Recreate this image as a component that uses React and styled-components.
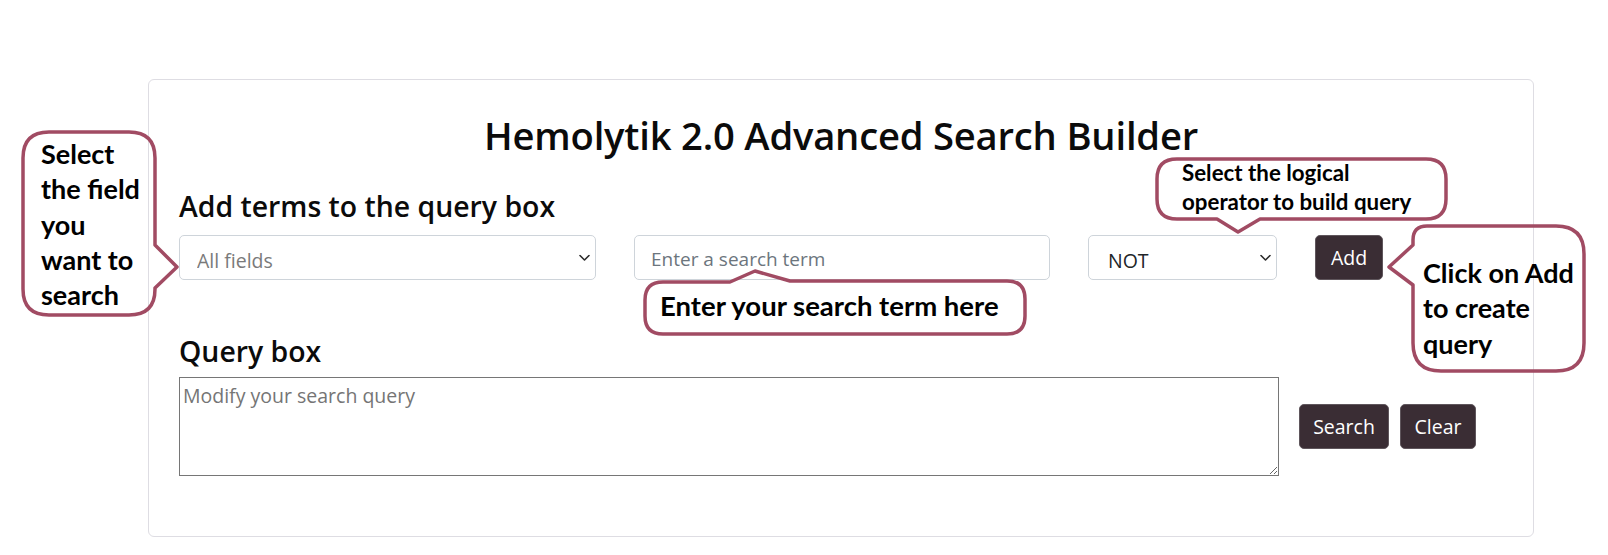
import React from 'react';
import styled, { createGlobalStyle } from 'styled-components';

const GlobalStyle = createGlobalStyle`
  html, body { margin: 0; padding: 0; background: #ffffff; }
  body { font-family: "Open Sans", "Liberation Sans", sans-serif; color: #212529; }
  *, *::before, *::after { box-sizing: border-box; }
`;

const Page = styled.div`
  position: relative;
  width: 1608px;
  height: 555px;
  padding: 79px 0 0 148px;
  overflow: hidden;
`;

const Card = styled.section`
  width: 1386px;
  height: 458px;
  border: 1px solid #dedde3;
  border-radius: 6px;
  padding: 32px 30px 0 30px;
  display: flex;
  flex-direction: column;
`;

const Title = styled.h1`
  margin: 0 0 31px 0;
  font-family: "Open Sans", "Liberation Sans", sans-serif;
  font-size: 38.2px;
  line-height: 47px;
  font-weight: 600;
  letter-spacing: -0.2px;
  color: #0b0b0b;
  text-align: center;
`;

const SectionTitle = styled.h3`
  margin: ${p => p.$top}px 0 ${p => p.$bottom}px 0;
  font-family: "Open Sans", "Liberation Sans", sans-serif;
  font-size: 28.4px;
  line-height: 32px;
  font-weight: 600;
  color: #0b0b0b;
`;

const TermsRow = styled.div`
  display: flex;
  align-items: center;
  gap: 38px;
  height: 45px;
`;

const SelectWrap = styled.div`
  position: relative;
  width: ${p => p.$w}px;
  height: 45px;
`;

const Select = styled.select`
  appearance: none;
  -webkit-appearance: none;
  width: 100%;
  height: 100%;
  border: 1px solid #ced4da;
  border-radius: 5px;
  background: #ffffff;
  font-family: "Open Sans", "Liberation Sans", sans-serif;
  font-size: 19.5px;
  color: ${p => (p.$muted ? '#7a7a7a' : '#212529')};
  padding: 5px 28px 0 ${p => p.$pad}px;
  outline: none;
`;

const Chevron = styled.svg`
  position: absolute;
  right: 6px;
  top: 50%;
  transform: translateY(-50%);
  pointer-events: none;
`;

const TextInput = styled.input`
  width: ${p => p.$w}px;
  height: 45px;
  border: 1px solid #ced4da;
  border-radius: 5px;
  padding: 3px 16px 0 16px;
  font-family: "Open Sans", "Liberation Sans", sans-serif;
  font-size: 19px;
  color: #212529;
  outline: none;
  &::placeholder { color: #6c757d; opacity: 1; }
`;

const DarkButton = styled.button`
  height: 45px;
  width: ${p => p.$w}px;
  border: 1px solid #5f565c;
  border-radius: 5px;
  background: #3a2d34;
  color: #ffffff;
  font-family: "Open Sans", "Liberation Sans", sans-serif;
  font-size: 19.5px;
  padding: 0;
  cursor: pointer;
`;

const QueryRow = styled.div`
  display: flex;
  align-items: center;
  gap: 20px;
`;

const QueryArea = styled.textarea`
  width: 1100px;
  height: 99px;
  border: 1px solid #767676;
  border-radius: 0;
  padding: 5px 3px;
  font-family: "Open Sans", "Liberation Sans", sans-serif;
  font-size: 19.5px;
  line-height: 1.3;
  color: #212529;
  outline: none;
  &::placeholder { color: #757575; opacity: 1; }
`;

const ButtonGroup = styled.div`
  display: flex;
  gap: 11px;
`;

/* Annotation callouts laid over the screenshot */
const Callout = styled.div`
  position: absolute;
  left: ${p => p.$x}px;
  top: ${p => p.$y}px;
  width: ${p => p.$w}px;
  height: ${p => p.$h}px;
  pointer-events: none;
`;

const CalloutShape = styled.svg`
  position: absolute;
  left: 0;
  top: 0;
  overflow: visible;
`;

const CalloutText = styled.div`
  position: absolute;
  left: ${p => p.$tx}px;
  top: ${p => p.$ty}px;
  font-family: "Lato", "Open Sans", sans-serif;
  font-weight: 700;
  font-size: ${p => p.$size}px;
  line-height: ${p => p.$lh}px;
  color: #000000;
  white-space: nowrap;
`;

const Line = styled.span`
  display: block;
`;

const STROKE = '#a14b63';

const callouts = [
  {
    x: 23, y: 132, w: 132, h: 183,
    d: 'M26,0 H106 Q132,0 132,26 V113 L154,135 L132,156 V157 Q132,183 106,183 H26 Q0,183 0,157 V26 Q0,0 26,0 Z',
    tx: 18, ty: 4, size: 27, lh: 35.3,
    lines: ['Select', 'the field', 'you', 'want to', 'search'],
  },
  {
    x: 1157, y: 159, w: 289, h: 60,
    d: 'M20,0 H269 Q289,0 289,20 V40 Q289,60 269,60 H103 L81,73 L60,60 H20 Q0,60 0,40 V20 Q0,0 20,0 Z',
    tx: 25, ty: 0, size: 22.3, lh: 28.5,
    lines: ['Select the logical', 'operator to build query'],
  },
  {
    x: 1413, y: 226, w: 171, h: 145,
    d: 'M14,0 H143 Q171,0 171,28 V117 Q171,145 143,145 H28 Q0,145 0,117 V59 L-24,41 L0,19 V14 Q0,0 14,0 Z',
    tx: 10, ty: 29, size: 27, lh: 35.3,
    lines: ['Click on Add', 'to create', 'query'],
  },
  {
    x: 645, y: 280, w: 380, h: 54,
    d: 'M18,2 H85 L110,-9 L145,1 H362 Q380,1 380,19 V36 Q380,54 362,54 H18 Q0,54 0,36 V20 Q0,2 18,2 Z',
    tx: 15, ty: 8, size: 27.5, lh: 35.3,
    lines: ['Enter your search term here'],
  },
];

function ChevronIcon() {
  return (
    <Chevron width="11" height="7" viewBox="0 0 11 7">
      <path d="M1 1 L5.5 5.5 L10 1" fill="none" stroke="#2b2b2b" strokeWidth="1.6" strokeLinecap="round" strokeLinejoin="round" />
    </Chevron>
  );
}

export default function App() {
  return (
    <>
      <GlobalStyle />
      <Page>
        <Card>
          <Title>Hemolytik 2.0 Advanced Search Builder</Title>
          <SectionTitle $top={0} $bottom={13}>Add terms to the query box</SectionTitle>
          <TermsRow>
            <SelectWrap $w={417}>
              <Select $muted $pad={17} defaultValue="all">
                <option value="all">All fields</option>
              </Select>
              <ChevronIcon />
            </SelectWrap>
            <TextInput $w={416} placeholder="Enter a search term" />
            <SelectWrap $w={189}>
              <Select $pad={19} defaultValue="NOT">
                <option value="AND">AND</option>
                <option value="OR">OR</option>
                <option value="NOT">NOT</option>
              </Select>
              <ChevronIcon />
            </SelectWrap>
            <DarkButton $w={68}>Add</DarkButton>
          </TermsRow>
          <SectionTitle $top={55} $bottom={10}>Query box</SectionTitle>
          <QueryRow>
            <QueryArea placeholder="Modify your search query" />
            <ButtonGroup>
              <DarkButton $w={90}>Search</DarkButton>
              <DarkButton $w={76}>Clear</DarkButton>
            </ButtonGroup>
          </QueryRow>
        </Card>
        {callouts.map((c, i) => (
          <Callout key={i} $x={c.x} $y={c.y} $w={c.w} $h={c.h}>
            <CalloutShape width={c.w} height={c.h} viewBox={`0 0 ${c.w} ${c.h}`}>
              <path d={c.d} fill="none" stroke={STROKE} strokeWidth="3.5" strokeLinejoin="round" />
            </CalloutShape>
            <CalloutText $tx={c.tx} $ty={c.ty} $size={c.size} $lh={c.lh}>
              {c.lines.map(l => <Line key={l}>{l}</Line>)}
            </CalloutText>
          </Callout>
        ))}
      </Page>
    </>
  );
}
